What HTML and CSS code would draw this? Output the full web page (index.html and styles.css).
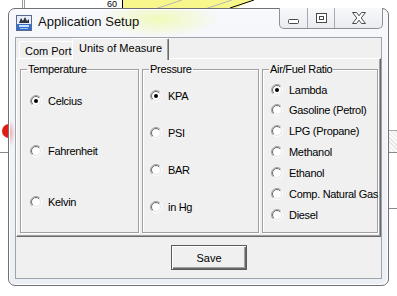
FILE: index.html
```html
<!DOCTYPE html>
<html lang="en">
<head>
    <meta charset="UTF-8">
    <title>Application Setup</title>
    <link rel="stylesheet" href="styles.css">
</head>
<body>
    <svg class="defs" width="0" height="0">
        <defs>
            <linearGradient id="ring-out" x1="0" y1="0" x2="1" y2="1">
                <stop offset="0.45" stop-color="#a0a0a0"/>
                <stop offset="0.55" stop-color="#ffffff"/>
            </linearGradient>
            <linearGradient id="ring-in" x1="0" y1="0" x2="1" y2="1">
                <stop offset="0.45" stop-color="#696969"/>
                <stop offset="0.55" stop-color="#e3e3e3"/>
            </linearGradient>
            <symbol id="radio" viewBox="0 0 12 12">
                <circle cx="6" cy="6" r="5.5" fill="none" stroke="url(#ring-out)"/>
                <circle cx="6" cy="6" r="4.5" fill="#fff" stroke="url(#ring-in)"/>
            </symbol>
        </defs>
    </svg>

    <!-- desktop behind the dialog -->
    <div class="desk">
        <div class="desk-axis"></div>
        <span class="desk-label">60</span>
        <svg class="desk-chart" width="160" height="10">
            <polygon points="0,0 132,0 110,10 0,10" fill="#f7f78c"/>
            <line x1="30" y1="10" x2="60" y2="0" stroke="#b8b8b8"/>
            <line x1="80" y1="10" x2="110" y2="0" stroke="#b8b8b8"/>
            <line x1="108" y1="8" x2="132" y2="0" stroke="#000"/>
            <line x1="0" y1="0" x2="0" y2="10" stroke="#000" stroke-width="2"/>
        </svg>
        <div class="desk-dot"></div>
        <div class="desk-line desk-line-left"></div>
        <div class="desk-hatch"></div>
        <div class="desk-line desk-line-right"></div>
        <div class="desk-line desk-line-right"></div>
    </div>

    <div class="window">
        <div class="titlebar">
            <svg class="app-icon" width="16" height="16" viewBox="0 0 16 16">
                <rect x="0.5" y="0.5" width="15" height="15" fill="#e8eef8" stroke="#5a6a8a"/>
                <path d="M3 8 L5 3 L7 6 L9 2 L11 6 L13 4 L13 8 Z" fill="#30343c"/>
                <rect x="1" y="9" width="14" height="6" fill="#2f6fd0"/>
                <rect x="3" y="10" width="10" height="2" fill="#cfe0ff"/>
                <rect x="4" y="13" width="8" height="1" fill="#9fc0f0"/>
            </svg>
            <span class="title">Application Setup</span>
            <div class="caption-buttons">
                <div class="cap-btn cap-min">
                    <svg width="11" height="5" viewBox="0 0 11 5"><rect x="0.5" y="0.5" width="10" height="4" rx="1" fill="#fff" stroke="#4a4a4a"/></svg>
                </div>
                <div class="cap-btn cap-max">
                    <svg width="11" height="10" viewBox="0 0 11 10"><rect x="0.5" y="0.5" width="10" height="9" fill="#fff" stroke="#4a4a4a"/><rect x="3.5" y="3.5" width="4" height="3" fill="#fff" stroke="#4a4a4a"/></svg>
                </div>
                <div class="cap-btn cap-close">
                    <svg width="14" height="12" viewBox="0 0 14 12"><path d="M0.5 0.5 H4.5 L7 3.8 L9.5 0.5 H13.5 L9.2 6 L13.5 11.5 H9.5 L7 8.2 L4.5 11.5 H0.5 L4.8 6 Z" fill="#fff" stroke="#4a4a4a" stroke-linejoin="round"/></svg>
                </div>
            </div>
        </div>

        <div class="client">
            <div class="tabs">
                <div class="tab">Com Port</div>
                <div class="tab tab-active">Units of Measure</div>
            </div>

            <div class="panel">
                <fieldset class="group group-temp">
                    <legend>Temperature</legend>
                    <div class="options">
                        <label class="option"><svg class="radio" width="12" height="12"><use href="#radio"/><circle cx="6" cy="6" r="2" fill="#000"/></svg>Celcius</label>
                        <label class="option"><svg class="radio" width="12" height="12"><use href="#radio"/></svg>Fahrenheit</label>
                        <label class="option"><svg class="radio" width="12" height="12"><use href="#radio"/></svg>Kelvin</label>
                    </div>
                </fieldset>

                <fieldset class="group group-press">
                    <legend>Pressure</legend>
                    <div class="options">
                        <label class="option"><svg class="radio" width="12" height="12"><use href="#radio"/><circle cx="6" cy="6" r="2" fill="#000"/></svg>KPA</label>
                        <label class="option"><svg class="radio" width="12" height="12"><use href="#radio"/></svg>PSI</label>
                        <label class="option"><svg class="radio" width="12" height="12"><use href="#radio"/></svg>BAR</label>
                        <label class="option"><svg class="radio" width="12" height="12"><use href="#radio"/></svg>in Hg</label>
                    </div>
                </fieldset>

                <fieldset class="group group-afr">
                    <legend>Air/Fuel Ratio</legend>
                    <div class="options">
                        <label class="option"><svg class="radio" width="12" height="12"><use href="#radio"/><circle cx="6" cy="6" r="2" fill="#000"/></svg>Lambda</label>
                        <label class="option"><svg class="radio" width="12" height="12"><use href="#radio"/></svg>Gasoline (Petrol)</label>
                        <label class="option"><svg class="radio" width="12" height="12"><use href="#radio"/></svg>LPG (Propane)</label>
                        <label class="option"><svg class="radio" width="12" height="12"><use href="#radio"/></svg>Methanol</label>
                        <label class="option"><svg class="radio" width="12" height="12"><use href="#radio"/></svg>Ethanol</label>
                        <label class="option"><svg class="radio" width="12" height="12"><use href="#radio"/></svg>Comp. Natural Gas</label>
                        <label class="option"><svg class="radio" width="12" height="12"><use href="#radio"/></svg>Diesel</label>
                    </div>
                </fieldset>
            </div>

            <div class="footer">
                <button class="save" type="button">Save</button>
            </div>
        </div>
    </div>
</body>
</html>
```

FILE: styles.css
```css
html, body {
    margin: 0;
    width: 397px;
    height: 296px;
    overflow: hidden;
    background-color: #fff;
    font-family: 'Liberation Sans', Arial, sans-serif;
}
.defs {
    position: absolute;
}

/* desktop bits peeking out from behind the dialog */
.desk-axis {
    position: absolute;
    left: 22px;
    top: 0;
    width: 1px;
    height: 10px;
    border-left: 1px solid #9a9a9a;
    border-right: 1px solid #9a9a9a;
}
.desk-label {
    position: absolute;
    left: 107px;
    top: 0;
    font-size: 9px;
    line-height: 8px;
    color: #000;
}
.desk-chart {
    position: absolute;
    left: 122px;
    top: 0;
}
.desk-dot {
    position: absolute;
    left: 2px;
    top: 124px;
    width: 14px;
    height: 14px;
    border-radius: 50%;
    background-color: #e21c12;
}
.desk-line {
    position: absolute;
    height: 1px;
    background-color: #8a8a8a;
}
.desk-line-left {
    left: 0;
    top: 152px;
    width: 10px;
}
.desk-hatch {
    position: absolute;
    left: 386px;
    top: 130px;
    width: 11px;
    height: 21px;
    border-top: 1px solid #a8a8a8;
    background: repeating-linear-gradient(45deg, #e6e6e6 0 1px, #fafafa 1px 3px);
}
.desk-line-right {
    left: 386px;
    top: 152px;
    width: 11px;
}
.desk-line-right + .desk-line-right {
    top: 208px;
}

/* dialog window */
.window {
    position: absolute;
    left: 8px;
    top: 8px;
    width: 381px;
    height: 278px;
    box-sizing: border-box;
    border: 1px solid #6e7176;
    border-radius: 7px;
    padding: 0 6px 6px;
    display: flex;
    flex-direction: column;
    background:
        radial-gradient(ellipse 60px 18px at 150px 10px, rgba(240, 250, 170, 0.8), rgba(240, 250, 170, 0)),
        radial-gradient(ellipse 5px 14px at 1px 124px, rgba(240, 150, 160, 0.8), rgba(240, 150, 160, 0)),
        linear-gradient(#f6f8fb, #eceff3);
    box-shadow: inset 1px 1px 0 #fdfdfd, inset -1px -1px 0 #fdfdfd;
}
.titlebar {
    height: 28px;
    display: flex;
    align-items: flex-start;
    flex-shrink: 0;
}
.app-icon {
    margin: 6px 0 0 1px;
}
.title {
    margin: 5px 0 0 6px;
    font-size: 13px;
    color: #111;
}
.caption-buttons {
    margin-left: auto;
    margin-right: -1px;
    margin-top: -1px;
    display: flex;
    height: 20px;
    border: 1px solid #8d9196;
    border-top: none;
    border-radius: 0 0 5px 5px;
    background: linear-gradient(#f8f9fb, #e9ecf0);
    overflow: hidden;
}
.cap-btn {
    display: flex;
    align-items: center;
    justify-content: center;
    box-sizing: border-box;
}
.cap-min {
    width: 28px;
    border-right: 1px solid #a6aab0;
    padding-top: 7px;
}
.cap-max {
    width: 27px;
    border-right: 1px solid #a6aab0;
}
.cap-close {
    width: 47px;
}

.client {
    flex: 1;
    display: flex;
    flex-direction: column;
    border: 1px solid #9ea4ac;
    background-color: #f0f0f0;
    font-size: 11px;
    letter-spacing: -0.3px;
    color: #000;
}

/* tabs */
.tabs {
    height: 20px;
    display: flex;
    align-items: flex-end;
    padding-left: 3px;
    position: relative;
    z-index: 1;
    letter-spacing: 0;
}
.tab {
    height: 17px;
    box-sizing: border-box;
    padding: 3px 5px 0 5px;
    border-top: 1px solid #fff;
    border-left: 1px solid #fff;
    border-right: 1px solid #696969;
    border-radius: 2px 2px 0 0;
    background-color: #f0f0f0;
    white-space: nowrap;
}
.tab:first-child {
    width: 54px;
    border-right: none;
}
.tab-active {
    height: 22px;
    margin-bottom: -2px;
    margin-left: -1px;
    padding: 3px 6px 0 6px;
    box-shadow: inset -1px 0 0 #a0a0a0;
}

.panel {
    height: 179px;
    box-sizing: border-box;
    display: flex;
    gap: 3px;
    padding: 4px 2px 3px 3px;
    border-top: 1px solid #fff;
    border-left: 1px solid #fff;
    border-right: 1px solid #696969;
    border-bottom: 1px solid #696969;
    box-shadow: inset -1px -1px 0 #a0a0a0;
}

/* group boxes */
.group {
    margin: 0;
    padding: 0;
    min-width: 0;
    border: 1px solid #a0a0a0;
    box-shadow: 1px 1px 0 #fff, inset 1px 1px 0 #fff;
    box-sizing: border-box;
}
.group legend {
    margin-left: 6px;
    padding: 0 1px;
    line-height: 12px;
}
.group-temp {
    width: 119px;
}
.group-press {
    width: 117px;
}
.group-afr {
    width: 116px;
}
.options {
    display: flex;
    flex-direction: column;
}
.option {
    display: flex;
    align-items: center;
    height: 13px;
    gap: 6px;
    white-space: nowrap;
}
.radio {
    flex-shrink: 0;
}
.group-temp .options {
    padding: 19px 0 0 9px;
    gap: 37.5px;
}
.group-press .options {
    padding: 14px 0 0 7px;
    gap: 24.3px;
}
.group-afr .options {
    padding: 8px 0 0 8px;
    gap: 7.9px;
}

/* footer */
.footer {
    flex: 1;
    padding: 8px 0 0 155px;
}
.save {
    width: 76px;
    height: 25px;
    padding: 0;
    font-family: 'Liberation Sans', Arial, sans-serif;
    font-size: 11px;
    color: #000;
    background-color: #f0f0f0;
    border: 1px solid #5a5a5a;
    box-shadow: inset 1px 1px 0 #fff, inset -1px -1px 0 #696969, inset -2px -2px 0 #a0a0a0;
}
```
